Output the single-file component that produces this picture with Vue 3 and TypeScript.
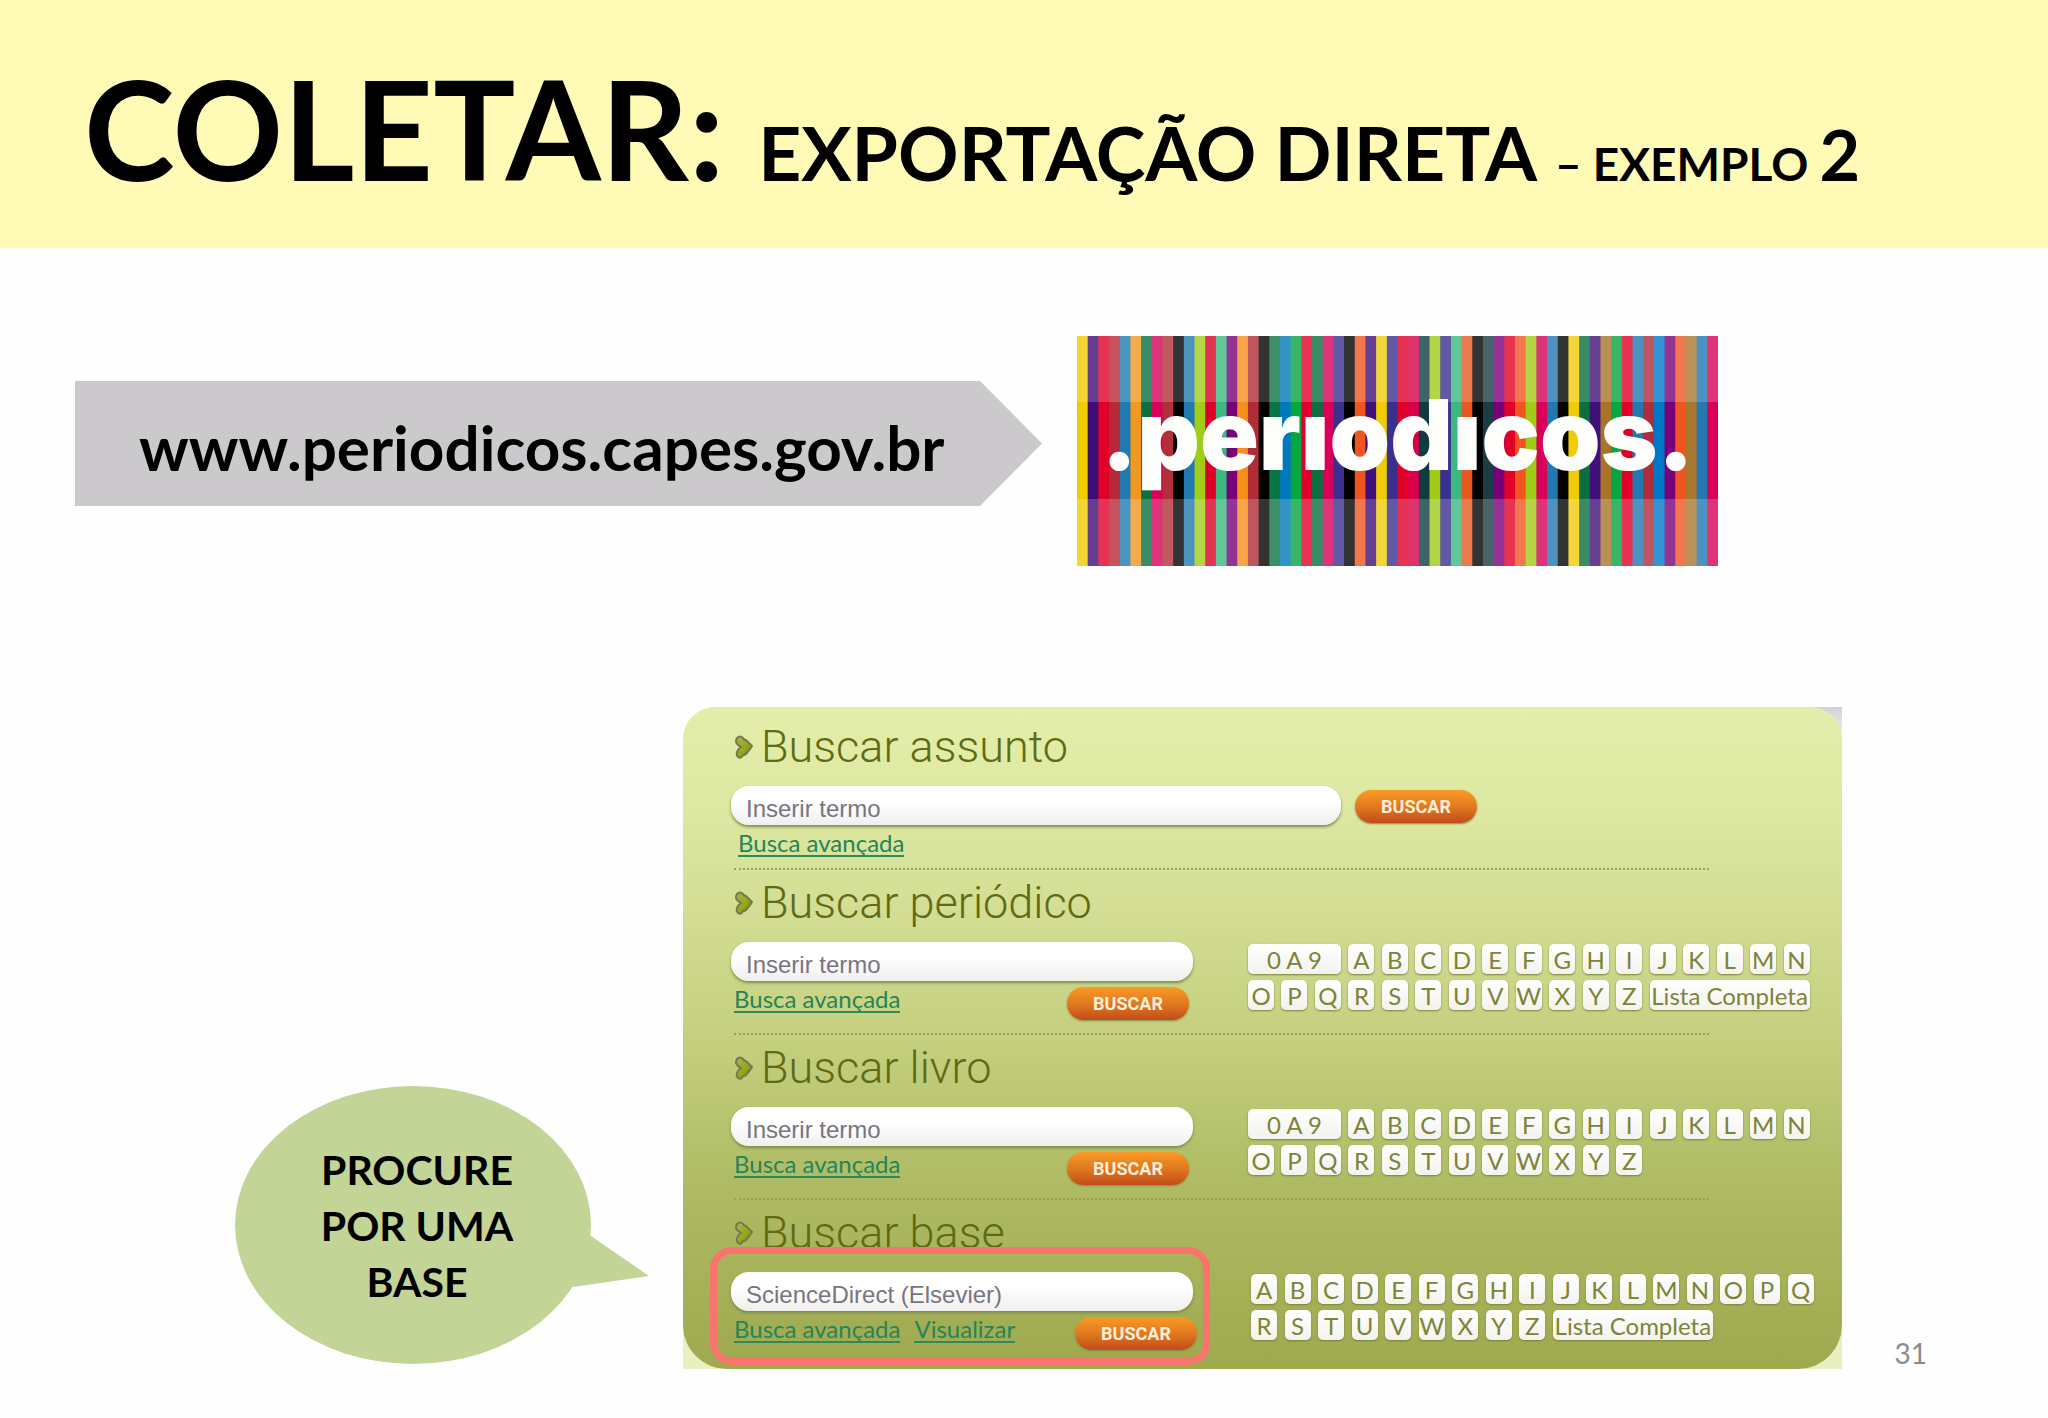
<script setup lang="ts">
interface SearchBlock {
  id: string
  title: string
  value: string
  links: string[]
  keys: { label: string; kind?: 'range' | 'full' }[]
}

const letters = (text: string) => text.split('').map((label) => ({ label }))
const alphabet = letters('ABCDEFGHIJKLMNOPQRSTUVWXYZ')

const blocks: SearchBlock[] = [
  { id: 'assunto', title: 'Buscar assunto', value: '', links: ['Busca avançada'], keys: [] },
  {
    id: 'periodico',
    title: 'Buscar periódico',
    value: '',
    links: ['Busca avançada'],
    keys: [{ label: '0 A 9', kind: 'range' }, ...alphabet, { label: 'Lista Completa', kind: 'full' }],
  },
  {
    id: 'livro',
    title: 'Buscar livro',
    value: '',
    links: ['Busca avançada'],
    keys: [{ label: '0 A 9', kind: 'range' }, ...alphabet],
  },
  {
    id: 'base',
    title: 'Buscar base',
    value: 'ScienceDirect (Elsevier)',
    links: ['Busca avançada', 'Visualizar'],
    keys: [...alphabet, { label: 'Lista Completa', kind: 'full' }],
  },
]

const stripes: string[] = [
  '#f0cc00', '#3f0d76', '#e00028', '#b52a38', '#1f7ab0', '#f09820', '#0a7040', '#d8005a', '#b0303a', '#000000',
  '#2278b0', '#a0cc18', '#dc0028', '#3cb880', '#780078', '#f49018', '#b02c38', '#000000', '#0a7544', '#0078bc',
  '#06a640', '#e0002c', '#087040', '#d80058', '#3a3090', '#000000', '#f05420', '#40107a', '#f0cc08', '#3a3090',
  '#e00028', '#d8004a', '#103c40', '#a0cc18', '#3a3090', '#3cb880', '#e85820', '#000000', '#1c3c48', '#780078',
  '#e00028', '#f05420', '#a0cc18', '#d80058', '#2278b0', '#000000', '#f0cc08', '#0a7040', '#40107a', '#a87428',
  '#06a640', '#e00028', '#2278b0', '#b02c38', '#0078c8', '#780078', '#f05420', '#a87830', '#2278b0', '#d80058',
]
</script>

<template>
  <div class="slide">
    <header class="banner">
      <h1>
        <span class="lead">COLETAR:</span>
        <span class="topic">EXPORTAÇÃO DIRETA</span>
        <span class="note">– EXEMPLO</span>
        <span class="count">2</span>
      </h1>
    </header>

    <main>
      <div class="source">
        <div class="address">www.periodicos.capes.gov.br</div>
        <div class="logo">
          <svg class="stripes" viewBox="0 0 60 230" preserveAspectRatio="none" aria-hidden="true">
            <rect v-for="(color, i) in stripes" :key="i" :x="i" y="0" :width="i < 59 ? 2 : 1" height="230" :fill="color" />
            <rect x="0" y="0" width="60" height="66" fill="#fff" opacity="0.2" />
            <rect x="0" y="163" width="60" height="67" fill="#fff" opacity="0.2" />
          </svg>
          <span class="wordmark">.perıodıcos.</span>
        </div>
      </div>

      <div class="demo">
        <div class="callout">
          <svg class="bubble" viewBox="0 0 415 278" aria-hidden="true">
            <ellipse cx="178" cy="139" rx="178" ry="139" fill="#c2d496" />
            <path d="M356 150L414 190L338 201L300 150Z" fill="#c2d496" />
          </svg>
          <p>PROCURE<br />POR UMA<br />BASE</p>
        </div>

        <div class="frame">
          <div class="panel">
            <form
              v-for="block in blocks"
              :key="block.id"
              class="block"
              :class="'block-' + block.id"
              @submit.prevent
            >
              <h2>
                <svg class="chevron" viewBox="0 0 18 24" aria-hidden="true">
                  <linearGradient :id="'leaf-' + block.id" x1="0" y1="0" x2="1" y2="1">
                    <stop offset="0" stop-color="#a9b455" />
                    <stop offset="0.6" stop-color="#8fa814" />
                    <stop offset="1" stop-color="#5d7010" />
                  </linearGradient>
                  <path
                    d="M2 3Q5 0 8 3Q9 5 11 5L17 11Q17 12 11 19Q10 20 8 20Q6 24 3 22Q1 21 2 17Q3 14 6 12Q2 10 1 7Q1 4 2 3Z"
                    :fill="'url(#leaf-' + block.id + ')'"
                    stroke="#77784f"
                    stroke-width="2"
                    stroke-linejoin="round"
                  />
                </svg>
                <label :for="block.id">{{ block.title }}</label>
              </h2>
              <div class="row">
                <div class="fields">
                  <input :id="block.id" type="text" placeholder="Inserir termo" :value="block.value" />
                  <div class="actions">
                    <a v-for="link in block.links" :key="link" href="#">{{ link }}</a>
                    <button v-if="block.keys.length" type="submit">BUSCAR</button>
                  </div>
                </div>
                <button v-if="!block.keys.length" type="submit">BUSCAR</button>
                <div v-if="block.keys.length" class="keys">
                  <a v-for="key in block.keys" :key="key.label" href="#" class="key" :class="key.kind">{{ key.label }}</a>
                </div>
              </div>
            </form>
          </div>
        </div>

        <span class="page">31</span>
      </div>
    </main>
  </div>
</template>

<style>
body {
  margin: 0;
  background: #fefefe;
}
</style>

<style scoped>
* {
  box-sizing: border-box;
}

.slide {
  font-family: Lato, 'Open Sans', sans-serif;
  color: #000;
}

.banner {
  padding: 44px 0 36px 84px;
  background: #fffbb7;
}

h1 {
  display: flex;
  align-items: baseline;
  height: 168px;
  margin: 0;
  font-weight: 700;
  line-height: 1;
  white-space: nowrap;
}

.lead {
  font-size: 137px;
  line-height: 168px;
}

.topic {
  margin-left: 34px;
  font-size: 75px;
}

.note {
  margin-left: 18px;
  font-size: 46px;
}

.count {
  margin-left: 11px;
  font-size: 70px;
}

main {
  padding: 88px 121px 49px 75px;
}

.source {
  display: flex;
  align-items: flex-start;
  gap: 35px;
}

.address {
  width: 967px;
  height: 125px;
  margin-top: 45px;
  padding-left: 64px;
  background: #cbc9cc;
  clip-path: polygon(0 0, 905px 0, 100% 50%, 905px 100%, 0 100%);
  font-size: 62px;
  font-weight: 700;
  line-height: 132px;
}

.logo {
  position: relative;
  display: flex;
  justify-content: center;
  width: 641px;
  height: 230px;
}

.stripes {
  position: absolute;
  inset: 0;
  width: 100%;
  height: 100%;
}

.wordmark {
  position: relative;
  color: #fdfdfb;
  font-family: Inter, Lato, sans-serif;
  font-size: 97px;
  font-weight: 900;
  line-height: 198px;
}

.demo {
  display: flex;
  align-items: flex-end;
  margin-top: 141px;
  padding-left: 160px;
}

.callout {
  position: relative;
  width: 415px;
  height: 278px;
  margin: 0 33px 5px 0;
}

.bubble {
  position: absolute;
  inset: 0;
  width: 100%;
  height: 100%;
}

.callout p {
  position: relative;
  width: 364px;
  margin: 0;
  padding-top: 56px;
  font-size: 41px;
  font-weight: 700;
  line-height: 56px;
  text-align: center;
}

.frame {
  flex: 1;
  background: linear-gradient(#d3d1d8, #f0f0f0) right top / 40px 32px no-repeat,
    linear-gradient(#e8efc0, #e8efc0) left bottom / 100% 48px no-repeat;
}

.panel {
  padding: 15px 32px 6px 48px;
  border-radius: 32px 32px 44px 44px;
  background: linear-gradient(#e4eeaa, #dde8a2 15%, #d2dc92 32%, #c3ce7c 52%, #b0bd66 70%, #a6b158 87%, #9fa94e);
}

.block {
  position: relative;
  height: 165px;
  padding-top: 10px;
}

.block-assunto {
  height: 146px;
  padding-top: 0;
}

.block + .block::before {
  content: '';
  position: absolute;
  top: 0;
  left: 3px;
  right: 101px;
  border-top: 2px dotted #98a252;
}

h2 {
  display: flex;
  align-items: center;
  gap: 8px;
  height: 64px;
  margin: 0;
  padding-left: 4px;
  padding-bottom: 14px;
  color: #5f6b14;
  font-family: Roboto, sans-serif;
  font-size: 45px;
  font-weight: 300;
  line-height: 50px;
}

.chevron {
  width: 18px;
  height: 24px;
}

.row {
  display: flex;
  align-items: flex-start;
  gap: 55px;
}

.block-assunto .row {
  gap: 14px;
}

.block-base .row {
  gap: 58px;
  margin-right: -4px;
}

.fields {
  width: 462px;
}

.block-assunto .fields {
  width: 610px;
}

input {
  display: block;
  width: 100%;
  height: 39px;
  padding: 7px 15px 0;
  border: 0;
  border-radius: 18px;
  background: linear-gradient(#fff 40%, #f0efee);
  box-shadow: 0 2px 3px #7f8a4c;
  color: #77757f;
  font-family: 'Liberation Sans', Arial, sans-serif;
  font-size: 24px;
}

input::placeholder {
  color: #77757f;
  opacity: 1;
}

.actions {
  display: flex;
  align-items: flex-start;
  gap: 14px;
  padding: 6px 4px 0 3px;
}

.block-assunto .actions {
  padding-left: 7px;
}

.block-base .actions {
  padding-right: 0;
  margin-right: -4px;
}

.actions a {
  height: 26px;
  border-bottom: 2px solid #2d8c5c;
  color: #268458;
  font-size: 24px;
  line-height: 24px;
  text-decoration: none;
}

button {
  width: 122px;
  height: 33px;
  padding: 0;
  border: 0;
  border-radius: 17px;
  background: linear-gradient(#fa9a26, #e07a1e 50%, #c24c1a);
  box-shadow: 0 1px 2px #8a8a44;
  color: #ffeeda;
  font-family: Roboto, sans-serif;
  font-size: 18px;
  font-weight: 700;
}

.actions button {
  margin-left: auto;
}

.row > button {
  margin-top: 4px;
}

.keys {
  display: grid;
  flex: 1;
  grid-template-columns: repeat(17, 26px);
  justify-content: space-between;
  row-gap: 6px;
  padding-top: 2px;
}

.key {
  height: 30px;
  border-radius: 5px;
  background: linear-gradient(#fff, #f3f2ee);
  box-shadow: 0 1px 2px #77823a;
  color: #7d8436;
  font-size: 24px;
  line-height: 32px;
  text-align: center;
  text-decoration: none;
  white-space: nowrap;
}

.range {
  grid-column: span 3;
}

.full {
  grid-column: span 5;
}

.block-base::after {
  content: '';
  position: absolute;
  top: 49px;
  left: -21px;
  box-sizing: border-box;
  width: 500px;
  height: 118px;
  border: 7px solid #f8746c;
  border-radius: 22px;
  pointer-events: none;
}

.page {
  margin: 0 0 0 53px;
  color: #8b8b8b;
  font-size: 28px;
  line-height: 32px;
}
</style>
